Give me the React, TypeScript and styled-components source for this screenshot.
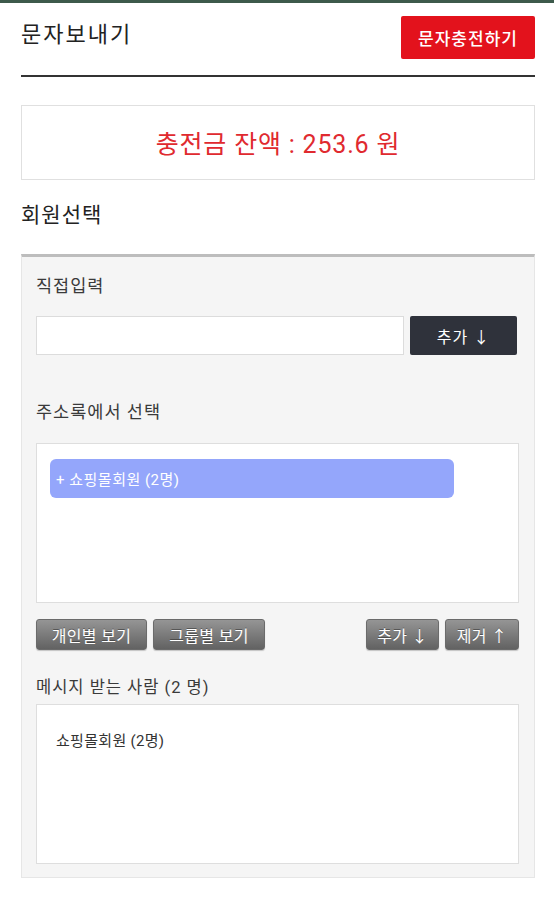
import styled, { createGlobalStyle } from "styled-components";

const GlobalStyle = createGlobalStyle`
    body {
        margin: 0;
        background: #fff;
        font-family: Roboto, "Noto Sans CJK KR", sans-serif;
        color: #222;
    }
`;

const TopBar = styled.div`
    height: 3px;
    background-color: #3d5a4b;
`;

const Page = styled.div`
    padding: 0 19px 0 21px;
`;

const Header = styled.div`
    display: flex;
    justify-content: space-between;
    align-items: center;
    padding: 13px 0 16px;
    border-bottom: 2px solid #333;
`;

const Title = styled.h1`
    margin: 0 0 5px;
    font-size: 22px;
    font-weight: 400;
    letter-spacing: 2px;
    line-height: 26px;
    color: #222;
`;

const ChargeBtn = styled.button`
    width: 134px;
    height: 43px;
    border: none;
    border-radius: 2px;
    background-color: #e3121c;
    color: #fff;
    font-family: inherit;
    font-size: 17px;
    letter-spacing: 1px;
    font-weight: 500;
    padding: 0;
`;

const BalanceBox = styled.div`
    margin-top: 28px;
    height: 75px;
    box-sizing: border-box;
    border: 1px solid #e0e0e0;
    display: flex;
    align-items: center;
    justify-content: center;
    color: #e02a2f;
    font-size: 25px;
    letter-spacing: 0.8px;
    padding-bottom: 2px;
`;

const SectionTitle = styled.h2`
    margin: 23px 0 27px;
    font-size: 21px;
    font-weight: 400;
    letter-spacing: 1px;
    line-height: 24px;
    color: #222;
`;

const Panel = styled.div`
    background-color: #f5f5f5;
    border: 1px solid #e6e6e6;
    border-top: 3px solid #bdbdbd;
    padding: 19px 15px 13px 14px;
`;

const Label = styled.div<{ $gap?: number; $size?: number }>`
    margin-top: ${(p) => p.$gap ?? 0}px;
    font-size: ${(p) => p.$size ?? 17.5}px;
    letter-spacing: 1px;
    line-height: 20px;
    color: #3a3a3a;
`;

const InputRow = styled.div`
    display: flex;
    gap: 6px;
    margin-top: 20px;
    padding-right: 2px;
`;

const TextInput = styled.input`
    flex: 1;
    height: 39px;
    box-sizing: border-box;
    border: 1px solid #dcdcdc;
    background: #fff;
    outline: none;
`;

const DarkBtn = styled.button`
    width: 107px;
    height: 39px;
    border: none;
    border-radius: 2px;
    background-color: #2f323b;
    color: #fff;
    font-family: inherit;
    font-size: 16px;
    letter-spacing: 1px;
    padding: 0;
`;

const ListBox = styled.div<{ $gap: number }>`
    margin-top: ${(p) => p.$gap}px;
    height: 160px;
    box-sizing: border-box;
    border: 1px solid #dedede;
    background: #fff;
`;

const SelectList = styled(ListBox)`
    padding: 15px 13px;
`;

const GroupItem = styled.div`
    width: 404px;
    height: 39px;
    box-sizing: border-box;
    border-radius: 6px;
    background-color: #94a6fb;
    color: #fff;
    font-size: 15px;
    letter-spacing: 0.5px;
    display: flex;
    align-items: center;
    padding-left: 6px;
`;

const RecipientList = styled(ListBox)`
    padding: 26px 19px;
    font-size: 15px;
    letter-spacing: 0.3px;
    line-height: 20px;
    color: #333;
`;

const ButtonRow = styled.div`
    display: flex;
    justify-content: space-between;
    margin-top: 16px;
`;

const BtnGroup = styled.div`
    display: flex;
    gap: 6px;
`;

const GrayBtn = styled.button<{ $w: number }>`
    width: ${(p) => p.$w}px;
    height: 31px;
    border: 1px solid #6b6b6b;
    border-radius: 3px;
    background: linear-gradient(#959595, #626262);
    box-shadow: 0 1px 1px rgba(0, 0, 0, 0.2);
    color: #fff;
    text-shadow: 0 -1px 0 rgba(0, 0, 0, 0.35);
    font-family: inherit;
    font-size: 16px;
    letter-spacing: 0.3px;
    padding: 0;
`;

export default function App() {
    return (
        <>
            <GlobalStyle />
            <TopBar />
            <Page>
                <Header>
                    <Title>문자보내기</Title>
                    <ChargeBtn>문자충전하기</ChargeBtn>
                </Header>

                <BalanceBox>충전금 잔액 : 253.6 원</BalanceBox>

                <SectionTitle>회원선택</SectionTitle>

                <Panel>
                    <Label>직접입력</Label>
                    <InputRow>
                        <TextInput />
                        <DarkBtn>추가 ↓</DarkBtn>
                    </InputRow>

                    <Label $gap={47}>주소록에서 선택</Label>
                    <SelectList $gap={21}>
                        <GroupItem>+ 쇼핑몰회원 (2명)</GroupItem>
                    </SelectList>

                    <ButtonRow>
                        <BtnGroup>
                            <GrayBtn $w={111}>개인별 보기</GrayBtn>
                            <GrayBtn $w={112}>그룹별 보기</GrayBtn>
                        </BtnGroup>
                        <BtnGroup>
                            <GrayBtn $w={73}>추가 ↓</GrayBtn>
                            <GrayBtn $w={74}>제거 ↑</GrayBtn>
                        </BtnGroup>
                    </ButtonRow>

                    <Label $gap={28} $size={16.5}>메시지 받는 사람 (2 명)</Label>
                    <RecipientList $gap={6}>쇼핑몰회원 (2명)</RecipientList>
                </Panel>
            </Page>
        </>
    );
}
